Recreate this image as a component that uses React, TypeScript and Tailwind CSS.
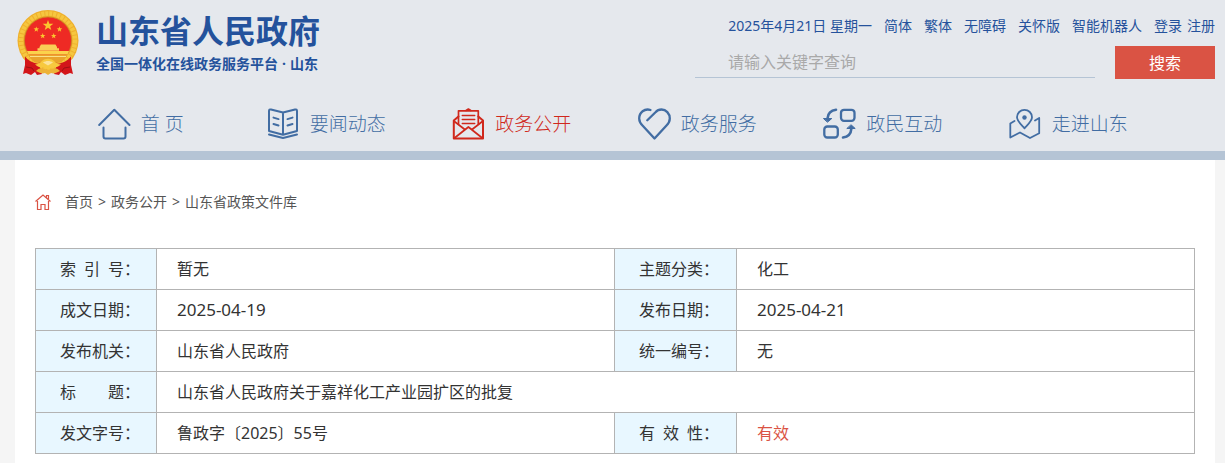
import type { ReactNode } from "react";

const star = (cx: number, cy: number, r: number) =>
    Array.from({ length: 10 }, (_, i) => {
        const radius = i % 2 === 0 ? r : r * 0.4;
        const angle = (Math.PI / 5) * i - Math.PI / 2;
        return `${cx + radius * Math.cos(angle)},${cy + radius * Math.sin(angle)}`;
    }).join(" ");

const Emblem = () => (
    <svg viewBox="0 0 64 68" className="h-[68px] w-16 shrink-0" aria-hidden="true">
        <circle cx="32" cy="31.5" r="30.5" fill="#efb02e" />
        <circle cx="32" cy="31.5" r="27" fill="none" stroke="#f6c73f" strokeWidth="4.5" strokeDasharray="3 1" />
        <circle cx="32" cy="31.5" r="23.6" fill="#ee2a24" stroke="#c98a20" strokeWidth="0.8" />
        <polygon points={star(32, 16.5, 5.6)} fill="#fbc62f" />
        <polygon points={star(20.3, 20.3, 2.9)} fill="#fbc62f" />
        <polygon points={star(43.5, 20.3, 2.9)} fill="#fbc62f" />
        <polygon points={star(26.7, 27, 2.9)} fill="#fbc62f" />
        <polygon points={star(37.7, 27, 2.9)} fill="#fbc62f" />
        <path d="M25 35.5h14.500l1.500 2.500v1.200h2v2.600H21.500v-2.600h2V38z" fill="#f9cf55" />
        <path d="M11 42h42l-1.500 3.500H12.500z" fill="#fbd24b" />
        <path d="M12.500 45.500h39c-1 3-4 6-6.500 8H19c-3-2-5.500-5-6.500-8z" fill="#e9a42c" />
        <path d="M14 47.500h36" stroke="#fbe08a" strokeWidth="1" />
        <path d="M9 47.500c3 4 8 6.500 14 7.500l3 10-5 1-2-3-4 3-5-2-3 1 2-9z" fill="#d3151a" />
        <path d="M55 47.500c-3 4-8 6.500-14 7.500l-3 10 5 1 2-3 4 3 5-2 3 1-2-9z" fill="#d3151a" />
        <path d="M10 58l6 1 2 3M54 58l-6 1-2 3" fill="none" stroke="#8f0f12" strokeWidth="0.8" />
        <path d="M19 55c3 1 5-1 7-3 3-3 9-3 12 0 2 2 4 4 7 3-2 3-6 4-9 3-2 3-6 3-8 0-3 1-7 0-9-3z" fill="#f7c93e" />
        <path d="M27 53.500c3-2 7-2 10 0l-5 3z" fill="#fbe39a" />
        <path d="M20 62c4-4 8-3 12 0 4-3 8-4 12 0-4 2-6 3-9 2l-3 2-3-2c-3 1-5 0-9-2z" fill="#edb237" />
    </svg>
);

const NavIcon = ({ children }: { children: ReactNode }) => (
    <svg
        viewBox="0 0 33 32"
        className="h-8 w-[33px] shrink-0"
        fill="none"
        stroke="currentColor"
        strokeWidth="2"
        strokeLinecap="round"
        strokeLinejoin="round"
        aria-hidden="true"
    >
        {children}
    </svg>
);

const navItems = [
    {
        label: "首 页",
        icon: (
            <>
                <path d="M1.2 17 16.3 1.8 31.5 17" />
                <path d="M5.5 19.5v9a2 2 0 0 0 2 2h18a2 2 0 0 0 2-2v-9" />
            </>
        ),
    },
    {
        label: "要闻动态",
        icon: (
            <>
                <path d="M16 4.500 4 1.500Q2 1 2 3v20l14 3.800L30 23V3q0-2-2-1.500zV26.500" />
                <path d="M2 26.500l14 3.500 14-3.500" />
                <path d="M6.500 9.600l5 1.500M6.500 16l5 1.500M25.500 9.600l-5 1.500M25.500 16l-5 1.500" />
            </>
        ),
    },
    {
        label: "政务公开",
        active: true,
        icon: (
            <>
                <path d="M6.500 8.500 1.800 12.500V30.500H31V12.500L26.300 8.500" />
                <path d="M6.500 16V2.800h19.800V16" strokeWidth="1.7" />
                <path d="M14 2.500l2.400-1.500 2.400 1.500" strokeWidth="1.5" />
                <path d="M1.800 13l11 8.500M31 13l-11 8.500M2.500 30l13.900-11L30.300 30" strokeWidth="1.7" />
                <path d="M10.300 7.500h12.400M10.300 11.500h12.400M10.300 15.500h12.400" strokeWidth="1.5" />
            </>
        ),
    },
    {
        label: "政务服务",
        icon: (
            <path
                d="M12.500 2C6.500 0 1.200 4.500 1.200 10.500c0 2.800 1.300 5 3.300 7L16.500 30.500l12-13c2-2 3.300-4.200 3.300-7 0-5-3.800-9-8.300-9-2.500 0-4.500 1-6 2.700L9.300 12.300"
                strokeWidth="2.3"
            />
        ),
    },
    {
        label: "政民互动",
        icon: (
            <>
                <rect x="18" y="1.8" width="13.5" height="11" rx="3" strokeWidth="2.3" />
                <rect x="1.3" y="18.5" width="13.5" height="11" rx="3" strokeWidth="2.3" />
                <path d="M13 1.800C8 2.500 5 5.500 4.600 10" strokeWidth="2.6" />
                <path d="M.8 10.500h8L4.700 14z" fill="currentColor" strokeWidth="1" />
                <path d="M20 29.500c5-.7 8-3.700 8.300-8.500" strokeWidth="2.6" />
                <path d="M24.200 20.500h8L28.300 17z" fill="currentColor" strokeWidth="1" />
            </>
        ),
    },
    {
        label: "走进山东",
        icon: (
            <>
                <path d="M15.500 20.300C11.500 16 8 13 8 9.300a7.500 7.500 0 0 1 15 0c0 3.700-3.500 6.700-7.500 11z" strokeWidth="1.8" />
                <circle cx="15.5" cy="9.5" r="2.2" fill="currentColor" stroke="none" />
                <path d="M5.500 13 1.300 15.500V29.500L11 24.500l10 5.500 9.200-4.700V10L26 12.500" strokeWidth="1.8" />
            </>
        ),
    },
];

const topLinks = ["简体", "繁体", "无障碍", "关怀版", "智能机器人"];

const Label = ({ children }: { children: ReactNode }) => (
    <th scope="row" className="border border-[#b3b3b3] bg-[#e8f7ff] pl-6 text-left font-normal">
        {children}
    </th>
);

const Value = ({ children, wide }: { children: ReactNode; wide?: boolean }) => (
    <td colSpan={wide ? 3 : 1} className="border border-[#b3b3b3] pl-5">
        {children}
    </td>
);

const App = () => {
    return (
        <div className="min-h-screen bg-[#f5f5f5] font-['Noto_Sans','Noto_Sans_CJK_SC',sans-serif] text-[#333]" lang="zh-CN">
            <header className="border-b-9 border-[#b5c4d5] bg-[#e5e8ed]">
                <div className="flex justify-between pt-[9px] pr-2.5 pl-4">
                    <a href="#" className="flex h-[70px] gap-4 text-[#24529c]">
                        <Emblem />
                        <span className="flex flex-col pt-[3px]">
                            <span className="text-[32px] leading-[38px] font-bold">山东省人民政府</span>
                            <span className="text-sm leading-7 font-bold">
                                全国一体化在线政务服务平台<span className="mx-1">·</span>山东
                            </span>
                        </span>
                    </a>
                    <div className="flex flex-col items-end">
                        <div className="flex h-[34px] items-center gap-3 text-sm text-[#25529c]">
                            <span>2025年4月21日 星期一</span>
                            {topLinks.map((link) => (
                                <a key={link} href="#">
                                    {link}
                                </a>
                            ))}
                            <span className="flex gap-[5px]">
                                <a href="#">登录</a>
                                <a href="#">注册</a>
                            </span>
                        </div>
                        <form className="mt-[3px] flex gap-5" onSubmit={(e) => e.preventDefault()}>
                            <input
                                type="text"
                                aria-label="搜索关键字"
                                placeholder="请输入关键字查询"
                                className="h-8 w-[400px] border-b border-[#b5c4d5] pr-2 pl-[33px] text-base outline-none placeholder:text-[#a9a9a9]"
                            />
                            <button type="submit" className="h-[33px] w-[100px] bg-[#da5344] text-base text-white">
                                搜索
                            </button>
                        </form>
                    </div>
                </div>
                <nav className="grid grid-cols-6 pt-[26px] pr-16 pb-2 pl-12">
                    {navItems.map((item) => (
                        <a
                            key={item.label}
                            href="#"
                            className={`flex h-[38px] items-center justify-center gap-2.5 text-[19px] font-light ${
                                item.active ? "text-[#d0281c]" : "text-[#426da3]"
                            }`}
                        >
                            <NavIcon>{item.icon}</NavIcon>
                            {item.label}
                        </a>
                    ))}
                </nav>
            </header>

            <main className="mr-2.5 ml-[15px] bg-white px-5 pb-[9px]">
                <div className="flex h-[88px] items-center gap-3.5 pb-1 text-sm text-[#555]">
                    <svg viewBox="0 0 16 16" className="size-4" fill="none" stroke="#da5344" strokeWidth="1.2" aria-hidden="true">
                        <path d="M.5 7.500 8 1l7.500 6.500M2.500 7v8.500h3.500v-5h4v5h3.500V7M11.500 3.500v-2h2V5" />
                    </svg>
                    <div className="flex gap-[5px]">
                        <a href="#">首页</a>
                        <span>&gt;</span>
                        <a href="#">政务公开</a>
                        <span>&gt;</span>
                        <a href="#">山东省政策文件库</a>
                    </div>
                </div>
                <table className="w-full table-fixed border-collapse text-base">
                    <colgroup>
                        <col className="w-[121px]" />
                        <col />
                        <col className="w-[122px]" />
                        <col />
                    </colgroup>
                    <tbody>
                        <tr className="h-[41px]">
                            <Label>索&ensp;引&ensp;号：</Label>
                            <Value>暂无</Value>
                            <Label>主题分类：</Label>
                            <Value>化工</Value>
                        </tr>
                        <tr className="h-[41px]">
                            <Label>成文日期：</Label>
                            <Value>
                                <span className="text-[17px]">2025-04-19</span>
                            </Value>
                            <Label>发布日期：</Label>
                            <Value>
                                <span className="text-[17px]">2025-04-21</span>
                            </Value>
                        </tr>
                        <tr className="h-[41px]">
                            <Label>发布机关：</Label>
                            <Value>山东省人民政府</Value>
                            <Label>统一编号：</Label>
                            <Value>无</Value>
                        </tr>
                        <tr className="h-[41px]">
                            <Label>标&emsp;&emsp;题：</Label>
                            <Value wide>山东省人民政府关于嘉祥化工产业园扩区的批复</Value>
                        </tr>
                        <tr className="h-[41px]">
                            <Label>发文字号：</Label>
                            <Value>鲁政字〔2025〕55号</Value>
                            <Label>有&ensp;效&ensp;性：</Label>
                            <Value>
                                <span className="text-[#da5344]">有效</span>
                            </Value>
                        </tr>
                    </tbody>
                </table>
            </main>
        </div>
    );
};

export default App;
